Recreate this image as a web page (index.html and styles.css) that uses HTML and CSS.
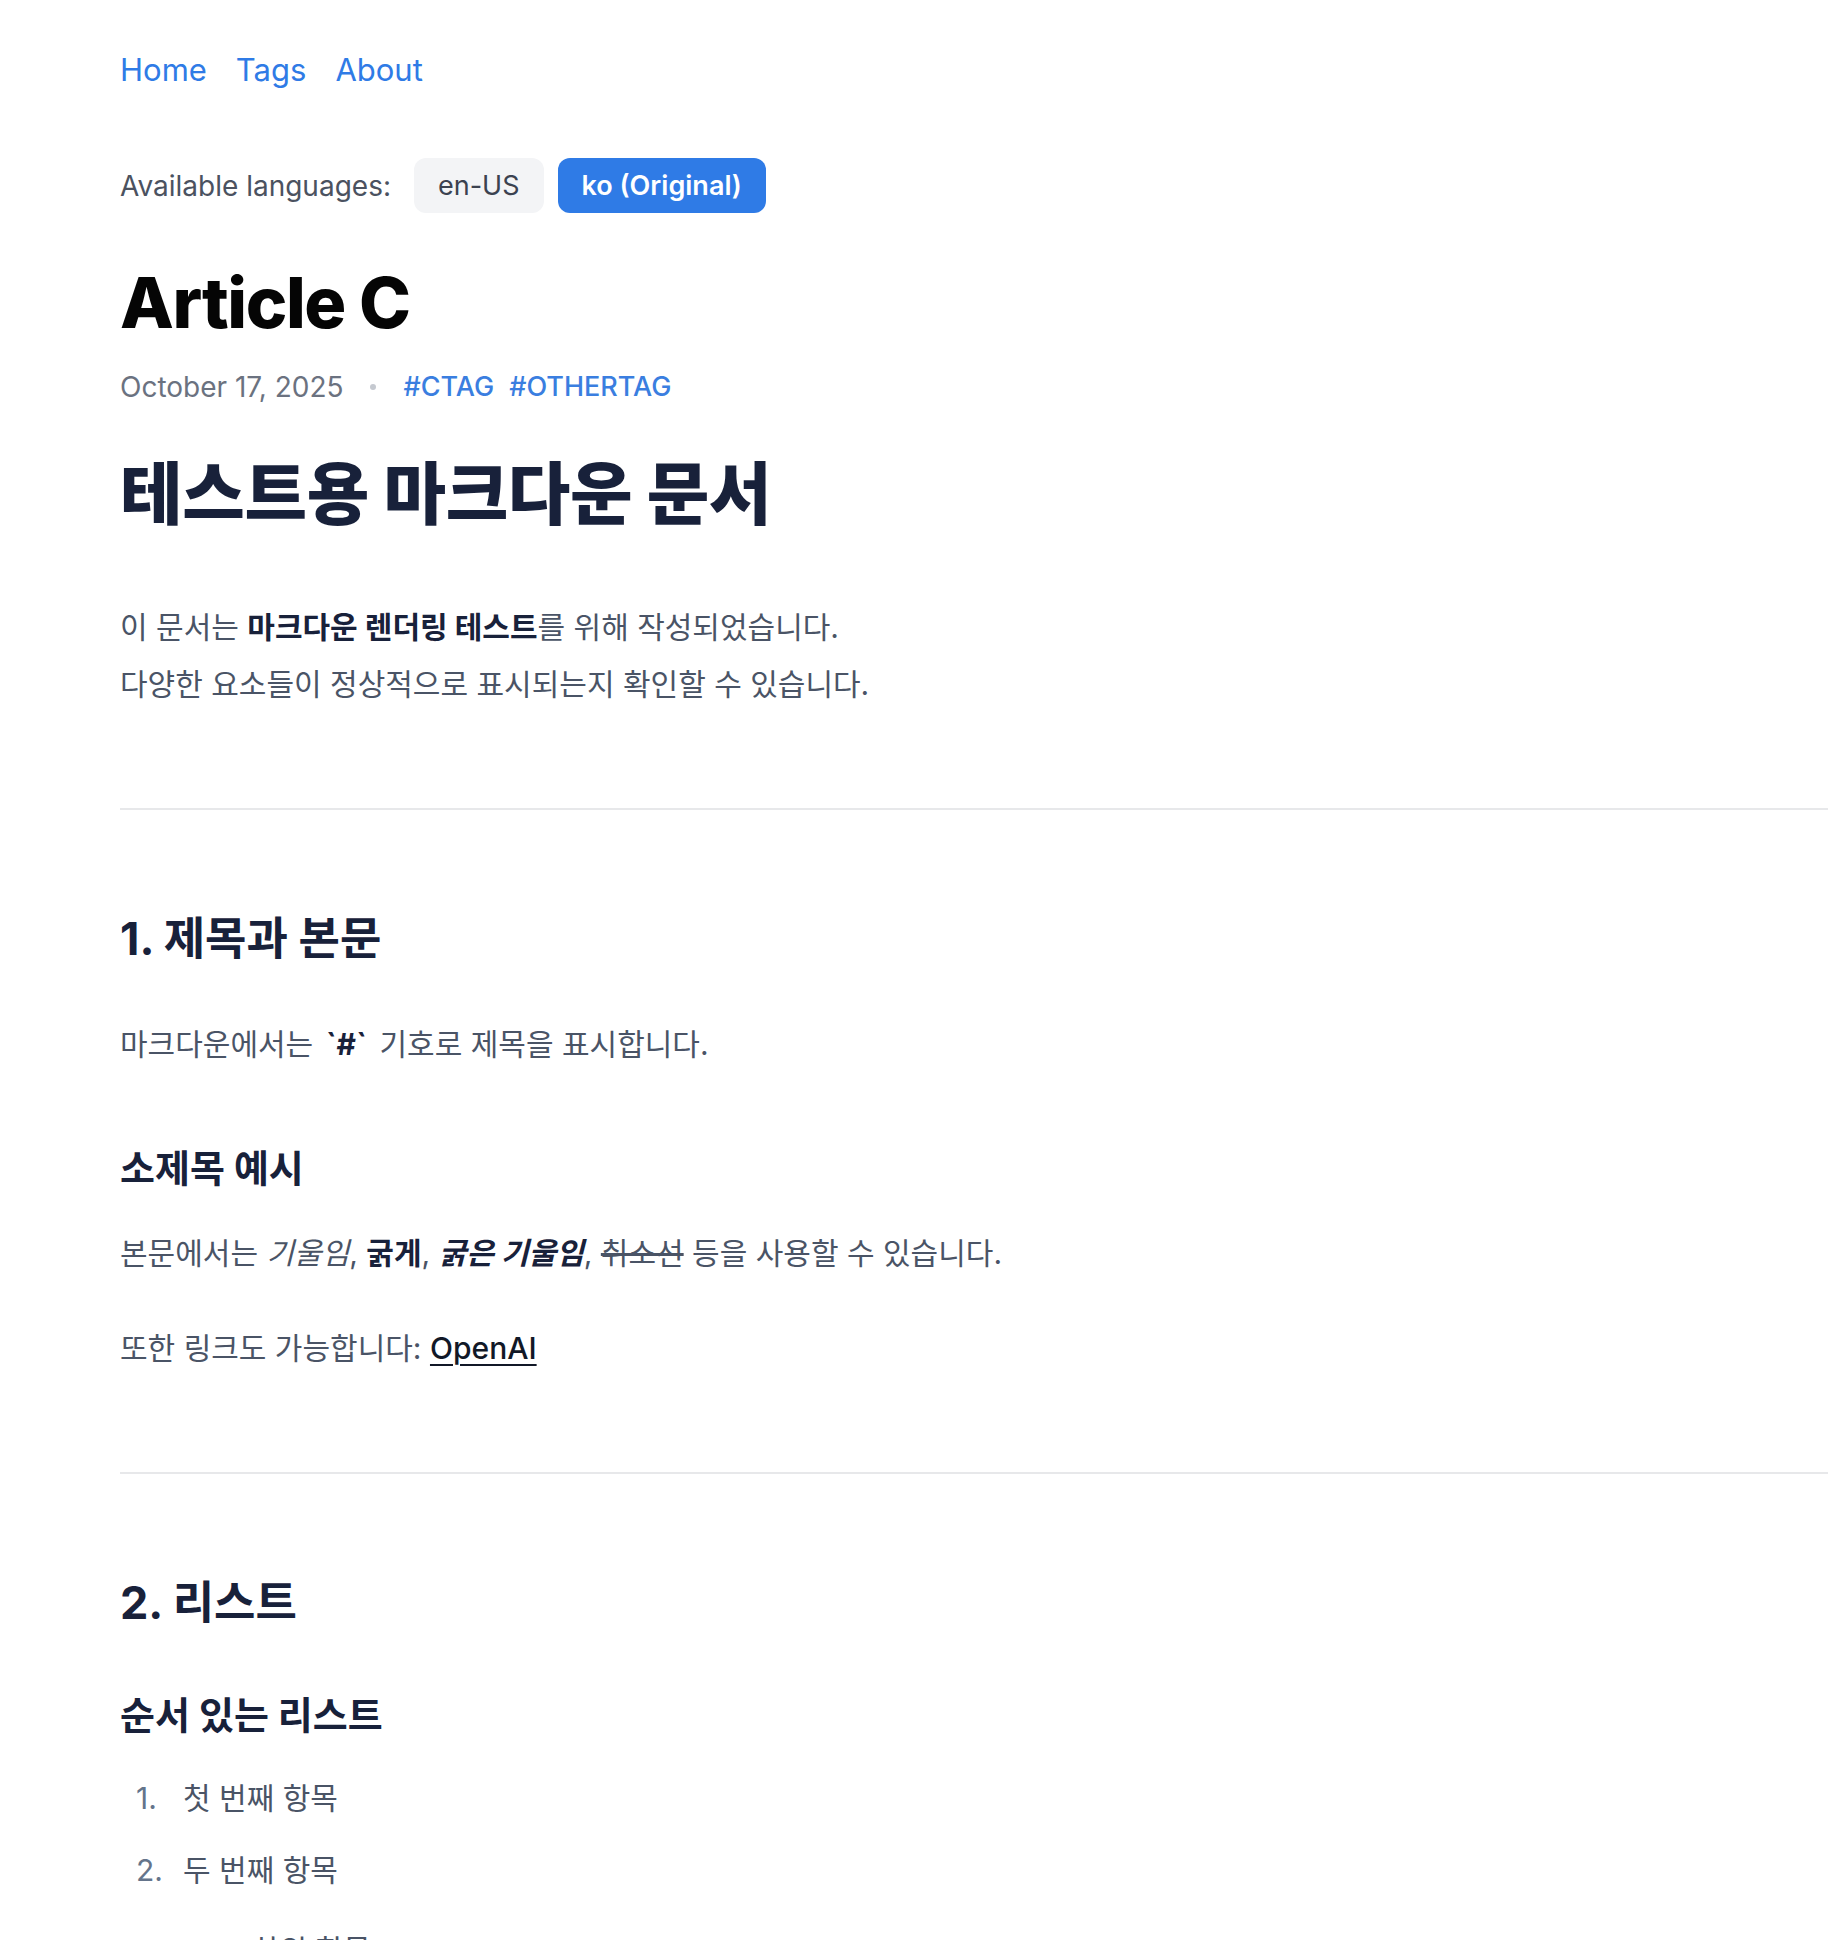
FILE: index.html
```html
<!DOCTYPE html>
<html lang="ko">
<head>
<meta charset="utf-8">
<title>Article C</title>
<link rel="stylesheet" href="styles.css">
</head>
<body>
<div class="page">
  <nav class="nav">
    <a href="#" class="nav-link">Home</a>
    <a href="#" class="nav-link">Tags</a>
    <a href="#" class="nav-link">About</a>
  </nav>

  <div class="langs">
    <span class="langs-label">Available languages:</span>
    <a href="#" class="lang-btn">en-US</a>
    <a href="#" class="lang-btn lang-btn-active">ko (Original)</a>
  </div>

  <h1 class="post-title">Article C</h1>

  <div class="meta">
    <span class="meta-date">October 17, 2025</span>
    <span class="meta-dot"></span>
    <span class="meta-tags">
      <a href="#" class="tag">#CTAG</a>
      <a href="#" class="tag">#OTHERTAG</a>
    </span>
  </div>

  <article class="content">
    <h1 class="doc-title">테스트용 마크다운 문서</h1>
    <p class="p-first">이 문서는 <strong>마크다운 렌더링 테스트</strong>를 위해 작성되었습니다.<br>다양한 요소들이 정상적으로 표시되는지 확인할 수 있습니다.</p>

    <hr class="rule">

    <h2 class="h2">1. 제목과 본문</h2>
    <p class="p-after-h2">마크다운에서는 <strong class="code-mark">`#`</strong> 기호로 제목을 표시합니다.</p>

    <h3 class="h3 h3-after-p">소제목 예시</h3>
    <p class="p-after-h3">본문에서는 <em>기울임</em>, <strong>굵게</strong>, <strong><em>굵은 기울임</em></strong>, <del>취소선</del> 등을 사용할 수 있습니다.</p>
    <p class="p-after-p">또한 링크도 가능합니다: <a href="#" class="link">OpenAI</a></p>

    <hr class="rule">

    <h2 class="h2">2. 리스트</h2>
    <h3 class="h3 h3-after-h2">순서 있는 리스트</h3>
    <ol class="olist">
      <li class="oitem"><div class="item-body">첫 번째 항목</div></li>
      <li class="oitem"><div class="item-body">두 번째 항목
        <ul class="ulist">
          <li class="uitem"><div class="item-body">하위 항목</div></li>
        </ul>
      </div></li>
    </ol>
  </article>
</div>
</body>
</html>
```

FILE: styles.css
```css
html, body {
  margin: 0;
  padding: 0;
  background: #ffffff;
}

body {
  font-family: Inter, "Noto Sans CJK KR", "Noto Sans", sans-serif;
  color: #4a5466;
}

.page {
  padding: 50px 0 80px 120px;
}

/* nav */
.nav {
  display: flex;
  gap: 29px;
  font-size: 31px;
  line-height: 40px;
}

.nav-link {
  color: #2f7be6;
  text-decoration: none;
}

/* languages */
.langs {
  margin-top: 68px;
  display: flex;
  align-items: center;
  gap: 14px;
}

.langs-label {
  font-size: 28px;
  color: #4b5260;
  margin-right: 9px;
}

.lang-btn {
  display: block;
  font-size: 27px;
  line-height: 35px;
  padding: 10px 24px;
  border-radius: 12px;
  background: #f3f4f6;
  color: #3b4250;
  text-decoration: none;
}

.lang-btn-active {
  background: #2f7be6;
  color: #ffffff;
  font-weight: 600;
}

/* title */
.post-title {
  margin: 50px 0 0;
  font-size: 70px;
  line-height: 80px;
  font-weight: 800;
  letter-spacing: -0.02em;
  color: #050505;
}

.meta {
  margin-top: 26px;
  display: flex;
  align-items: center;
  gap: 27px;
  font-size: 28px;
  line-height: 36px;
}

.meta-date {
  color: #6b7280;
}

.meta-dot {
  width: 6px;
  height: 6px;
  border-radius: 50%;
  background: #c5c9d0;
}

.meta-tags {
  display: flex;
  gap: 15px;
}

.tag {
  color: #3a7ee0;
  text-decoration: none;
  font-weight: 500;
  font-size: 27px;
}

/* content */
.content {
  font-size: 30px;
  line-height: 57px;
}

.doc-title {
  margin: 47px 0 0;
  font-size: 68px;
  line-height: 85px;
  font-weight: 800;
  color: #18213a;
  letter-spacing: -0.005em;
}

.content p {
  margin: 0;
}

.content strong {
  color: #18213a;
  font-weight: 700;
}

.code-mark {
  margin: 0 4px;
}

.content del {
  text-decoration: line-through;
}

.p-first { margin-top: 62px !important; }
.p-after-h2 { margin-top: 51px !important; }
.p-after-h3 { margin-top: 34px !important; }
.p-after-p { margin-top: 38px !important; }

.rule {
  margin: 95px 0 0;
  border: 0;
  height: 2px;
  background: #e7e8ea;
}

.h2 {
  margin: 102px 0 0;
  font-size: 45px;
  line-height: 53px;
  font-weight: 700;
  color: #18213a;
}

.h3 {
  font-size: 38px;
  line-height: 46px;
  font-weight: 700;
  color: #18213a;
  margin: 0;
}

.h3-after-p { margin-top: 72px; }
.h3-after-h2 { margin-top: 63px; }

.link {
  color: #111827;
  font-weight: 500;
  text-decoration: underline;
  text-underline-offset: 5px;
  text-decoration-thickness: 2px;
}

/* lists */
.olist {
  list-style: none;
  margin: 32px 0 0;
  padding: 0 0 0 16px;
  counter-reset: item;
}

.oitem {
  counter-increment: item;
  display: flex;
  margin-top: 15px;
}

.oitem:first-child {
  margin-top: 0;
}

.oitem::before {
  content: counter(item) ".";
  flex: none;
  width: 47px;
  color: #64748b;
}

.ulist {
  list-style: none;
  margin: 23px 0 0;
  padding: 0 0 0 22px;
}

.uitem {
  display: flex;
}

.uitem::before {
  content: "\2022";
  flex: none;
  width: 47px;
  color: #64748b;
}
```
